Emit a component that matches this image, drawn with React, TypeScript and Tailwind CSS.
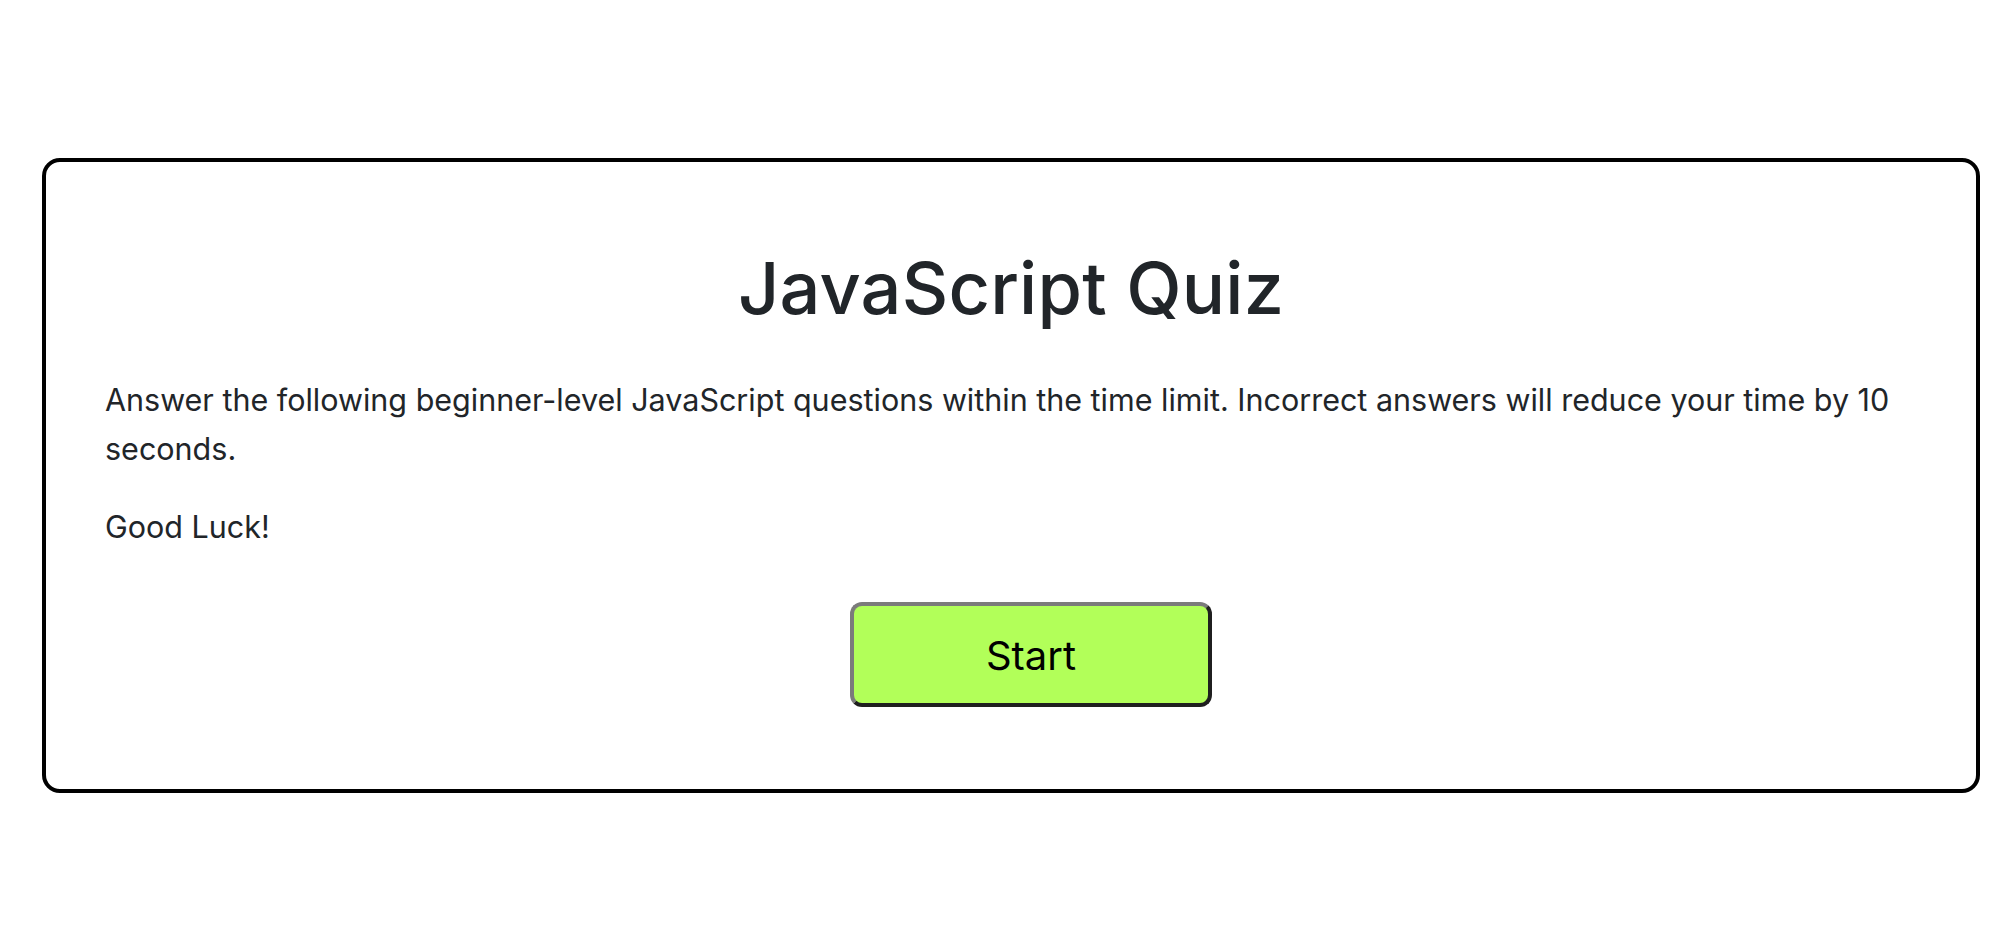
const INTRO =
  "Answer the following beginner-level JavaScript questions within the time limit. Incorrect answers will reduce your time by 10 seconds.";

const StartButton = () => (
  <button
    type="button"
    className="h-[105px] w-[362px] rounded-[12px] border-[4px] border-t-[#7b7b7b] border-l-[#7b7b7b] border-r-[#1f1f1f] border-b-[#1f1f1f] bg-[#b2ff59] pt-[3px] text-[40px] leading-none text-black"
  >
    Start
  </button>
);

const App = () => {
  return (
    <div
      className="min-h-screen bg-white pt-[158px] text-[#212529]"
      style={{ fontFamily: "Inter, 'Noto Sans', sans-serif" }}
    >
      <div className="ml-[42px] mr-[14px] rounded-[18px] border-[4px] border-black px-[59px] pt-[83px] pb-[82px]">
        <h1 className="text-center text-[72px] leading-[86px] font-medium tracking-[0.2px]">
          JavaScript Quiz
        </h1>
        <p className="mt-[44px] mb-[29px] text-[30.5px] leading-[49px]">
          {INTRO}
        </p>
        <p className="text-[30.5px] leading-[49px]">Good Luck!</p>
        <div className="mt-[51px] flex justify-center pl-[40px]">
          <StartButton />
        </div>
      </div>
    </div>
  );
};

export default App;
